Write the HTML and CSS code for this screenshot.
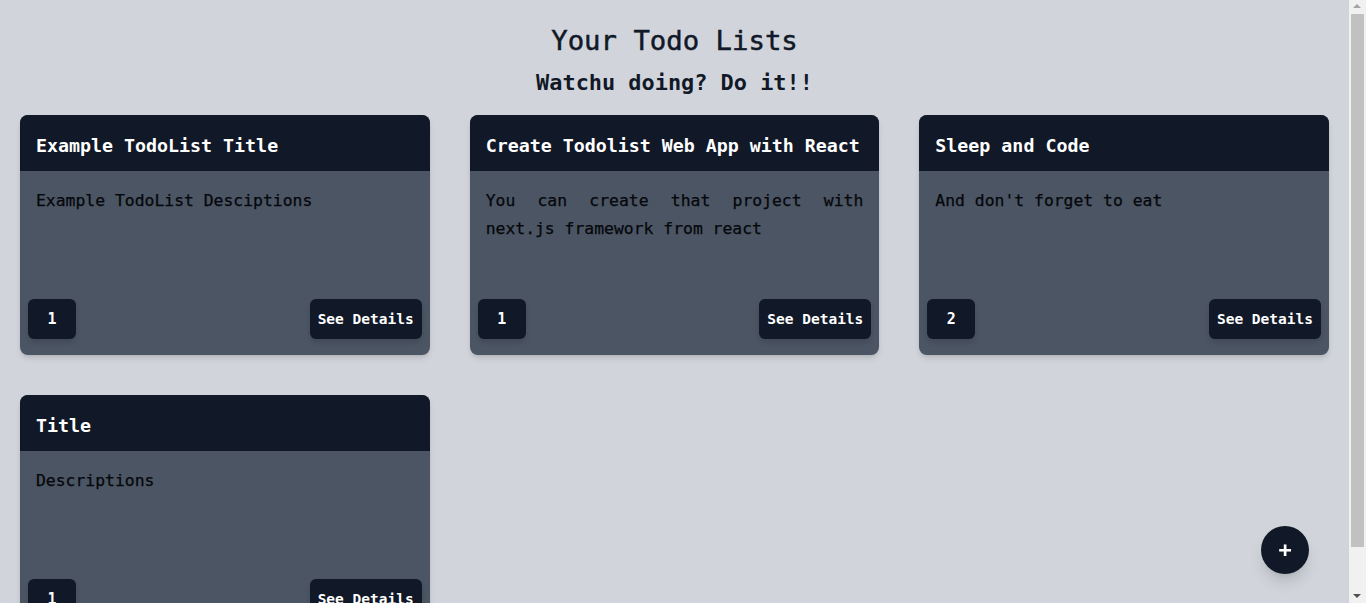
FILE: index.html
```html
<!DOCTYPE html>
<html lang="en">
<head>
<meta charset="utf-8">
<title>Your Todo Lists</title>
<link rel="stylesheet" href="styles.css">
</head>
<body>
<main class="page">
  <header class="intro">
    <h1 class="title">Your Todo Lists</h1>
    <h2 class="subtitle">Watchu doing? Do it!!</h2>
  </header>
  <section class="grid">
    <article class="card">
      <div class="card-head">Example TodoList Title</div>
      <div class="card-body">
        <p class="desc">Example TodoList Desciptions</p>
        <div class="card-foot">
          <button class="btn btn-count">1</button>
          <button class="btn btn-details">See Details</button>
        </div>
      </div>
    </article>
    <article class="card">
      <div class="card-head">Create Todolist Web App with React</div>
      <div class="card-body">
        <p class="desc">You can create that project with next.js framework from react</p>
        <div class="card-foot">
          <button class="btn btn-count">1</button>
          <button class="btn btn-details">See Details</button>
        </div>
      </div>
    </article>
    <article class="card">
      <div class="card-head">Sleep and Code</div>
      <div class="card-body">
        <p class="desc">And don't forget to eat</p>
        <div class="card-foot">
          <button class="btn btn-count">2</button>
          <button class="btn btn-details">See Details</button>
        </div>
      </div>
    </article>
    <article class="card">
      <div class="card-head">Title</div>
      <div class="card-body">
        <p class="desc">Descriptions</p>
        <div class="card-foot">
          <button class="btn btn-count">1</button>
          <button class="btn btn-details">See Details</button>
        </div>
      </div>
    </article>
  </section>
</main>
<button class="fab" aria-label="Add">+</button>
<div class="scrollbar" aria-hidden="true">
  <div class="sb-arrow sb-up"></div>
  <div class="sb-track"><div class="sb-thumb"></div></div>
  <div class="sb-arrow sb-down"></div>
</div>
</body>
</html>
```

FILE: styles.css
```css
html, body {
  margin: 0;
  padding: 0;
}
body {
  background: #d1d5db;
  color: #111827;
  font-family: "DejaVu Sans Mono", "Liberation Mono", monospace;
}
.page {
  padding: 23px 37px 10px 20px;
}
.intro {
  text-align: center;
  margin-bottom: 16px;
}
.title {
  margin: 0;
  font-size: 27.3px;
  line-height: 36px;
  font-weight: 400;
  -webkit-text-stroke: 0.5px #111827;
}
.subtitle {
  margin: 8px 0 0;
  font-size: 21.9px;
  line-height: 32px;
  font-weight: 700;
}
.grid {
  display: grid;
  grid-template-columns: repeat(3, 1fr);
  column-gap: 40px;
  row-gap: 40px;
}
.card {
  border-radius: 8px;
  overflow: hidden;
  background: #4b5563;
  box-shadow: 0 4px 6px -1px rgba(0,0,0,0.12), 0 2px 4px -2px rgba(0,0,0,0.1);
  display: flex;
  flex-direction: column;
}
.card-head {
  background: #111827;
  color: #ffffff;
  font-weight: 700;
  font-size: 18.3px;
  line-height: 28px;
  padding: 17px 16px 11px;
  white-space: nowrap;
}
.card-body {
  display: flex;
  flex-direction: column;
}
.desc {
  margin: 0;
  padding: 16px 16px 0;
  height: 128px;
  box-sizing: border-box;
  font-size: 16.4px;
  line-height: 28px;
  color: #05070b;
  text-align: justify;
  -webkit-text-stroke: 0.25px #05070b;
}
.card-foot {
  display: flex;
  justify-content: space-between;
  padding: 0 8px 16px;
}
.btn {
  background: #111827;
  color: #ffffff;
  border: 0;
  border-radius: 6px;
  height: 40px;
  font-family: "DejaVu Sans Mono", "Liberation Mono", monospace;
  font-weight: 700;
  font-size: 14.5px;
  box-shadow: 0 4px 6px -1px rgba(0,0,0,0.15);
  cursor: pointer;
}
.btn-count {
  width: 48px;
  font-size: 15px;
}
.btn-details {
  padding: 0 8px;
}
.fab {
  position: fixed;
  right: 57px;
  bottom: 29px;
  width: 48px;
  height: 48px;
  border-radius: 50%;
  border: 0;
  background: #111827;
  color: #ffffff;
  font-family: "DejaVu Sans Mono", monospace;
  font-size: 22px;
  font-weight: 700;
  line-height: 48px;
  padding: 0;
  box-shadow: 0 10px 15px -3px rgba(0,0,0,0.15), 0 4px 6px -4px rgba(0,0,0,0.1);
}
.scrollbar {
  position: fixed;
  top: 0;
  right: 0;
  bottom: 0;
  width: 17px;
  background: #f1f1f1;
  display: flex;
  flex-direction: column;
}
.sb-arrow {
  height: 14px;
  flex: none;
  position: relative;
}
.sb-arrow::after {
  content: "";
  position: absolute;
  left: 4px;
  width: 0;
  height: 0;
  border-left: 4px solid transparent;
  border-right: 4px solid transparent;
}
.sb-up::after {
  top: 4px;
  border-bottom: 4px solid #a3a3a3;
}
.sb-down::after {
  top: 5px;
  border-top: 4px solid #505050;
}
.sb-track {
  flex: 1;
  padding: 0 2px;
  display: flex;
  flex-direction: column;
}
.sb-thumb {
  height: 533px;
  margin-top: 0;
  background: #c1c1c1;
}
```
